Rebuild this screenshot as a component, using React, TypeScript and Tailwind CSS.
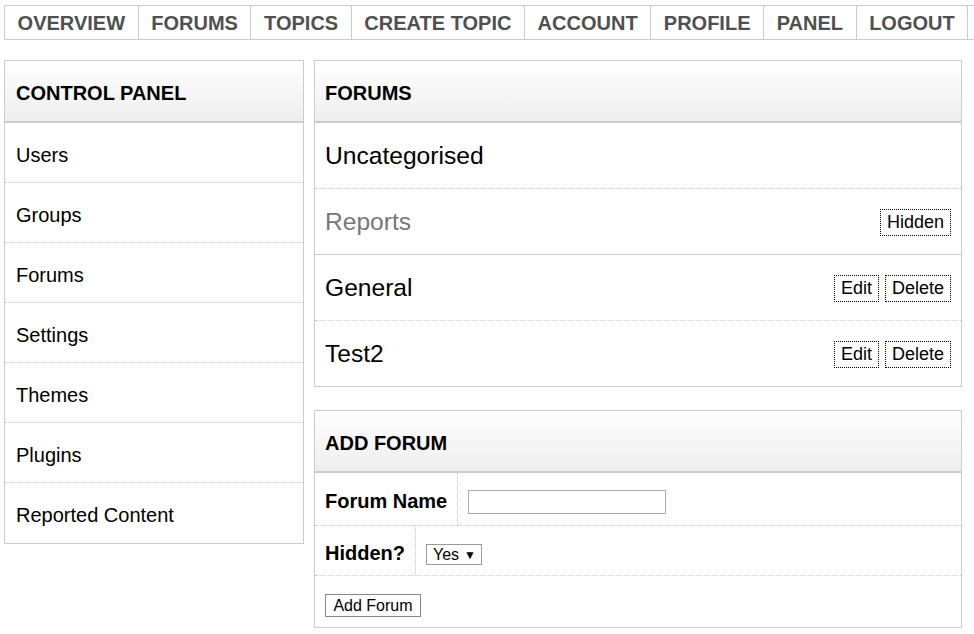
import React from "react";

const navItems = ["OVERVIEW", "FORUMS", "TOPICS", "CREATE TOPIC", "ACCOUNT", "PROFILE", "PANEL", "LOGOUT"];
const menu = ["Users", "Groups", "Forums", "Settings", "Themes", "Plugins", "Reported Content"];

function Header({ title, pl }: { title: string; pl: string }) {
  return (
    <div
      className={`h-[62px] pt-[3px] ${pl} flex items-center border-b-2 border-[#cccccc] bg-gradient-to-b from-[#ffffff] to-[#eeeeee] text-[20px] font-bold text-black`}
    >
      {title}
    </div>
  );
}

function Btn({ children }: { children: React.ReactNode }) {
  return (
    <span className="h-[27px] px-[6px] flex items-center border border-dotted border-black text-[18px] leading-none text-black">
      {children}
    </span>
  );
}

export default function App() {
  return (
    <div className="w-[974px] h-[634px] overflow-hidden bg-white font-['Liberation_Sans',Arial,sans-serif]">
      <nav className="mt-[5px] ml-[4px] h-[35px] flex border-y border-l border-[#cccccc]">
        {navItems.map((n) => (
          <div
            key={n}
            className="px-[12.6px] flex items-center border-r border-[#cccccc] text-[20px] font-bold text-[#505050] leading-none whitespace-nowrap"
          >
            {n}
          </div>
        ))}
      </nav>

      <div className="mt-[20px] ml-[4px] flex gap-[10px] items-start">
        <div className="w-[300px] border border-[#cccccc]">
          <Header title="CONTROL PANEL" pl="px-[11px]" />
          {menu.map((m, i) => (
            <div
              key={m}
              className={`h-[60px] pt-[4px] px-[11px] flex items-center text-[20px] text-black ${
                i < menu.length - 1 ? "border-b border-dotted border-[#c8c8c8]" : ""
              }`}
            >
              {m}
            </div>
          ))}
        </div>

        <div className="w-[648px] flex flex-col">
          <div className="border border-[#cccccc]">
            <Header title="FORUMS" pl="px-[10px]" />
            <div className="h-[66px] pt-[2px] px-[10px] flex items-center border-b border-dotted border-[#c8c8c8] text-[24.6px] text-black">
              Uncategorised
            </div>
            <div className="h-[66px] pt-[1px] px-[10px] flex items-center justify-between border-b border-[#cccccc] text-[24.6px] text-[#777777]">
              <span className="pt-[1px]">Reports</span>
              <Btn>Hidden</Btn>
            </div>
            <div className="h-[66px] pt-[1px] px-[10px] flex items-center justify-between border-b border-dotted border-[#c8c8c8] text-[24.6px] text-black">
              <span className="pt-[1px]">General</span>
              <div className="flex gap-[6px]">
                <Btn>Edit</Btn>
                <Btn>Delete</Btn>
              </div>
            </div>
            <div className="h-[65px] pt-[1px] px-[10px] flex items-center justify-between text-[24.6px] text-black">
              <span className="pt-[1px]">Test2</span>
              <div className="flex gap-[6px]">
                <Btn>Edit</Btn>
                <Btn>Delete</Btn>
              </div>
            </div>
          </div>

          <div className="mt-[23px] border border-[#cccccc]">
            <Header title="ADD FORUM" pl="px-[10px]" />
            <div className="h-[53px] flex border-b border-dotted border-[#c8c8c8]">
              <div className="px-[10px] pt-[4px] flex items-center border-r border-dotted border-[#c8c8c8] text-[20px] font-bold text-black">
                Forum Name
              </div>
              <div className="pl-[10px] pt-[6px] flex items-center">
                <div className="w-[198px] h-[24px] border border-[#aaaaaa] bg-white" />
              </div>
            </div>
            <div className="h-[50px] flex border-b border-dotted border-[#c8c8c8]">
              <div className="px-[10px] pt-[4px] flex items-center border-r border-dotted border-[#c8c8c8] text-[20px] font-bold text-black">
                Hidden?
              </div>
              <div className="pl-[10px] pt-[8px] flex items-center">
                <div className="w-[56px] h-[21px] pl-[6px] flex items-center gap-[5px] border border-[#999999] text-[16px] leading-none text-black">
                  <span>Yes</span>
                  <span className="text-[12px]">▼</span>
                </div>
              </div>
            </div>
            <div className="h-[51px] pt-[8px] px-[10px] flex items-center">
              <div className="w-[96px] h-[23px] flex items-center justify-center border border-[#888888] text-[16px] leading-none text-black">
                Add Forum
              </div>
            </div>
          </div>
        </div>
      </div>
    </div>
  );
}
